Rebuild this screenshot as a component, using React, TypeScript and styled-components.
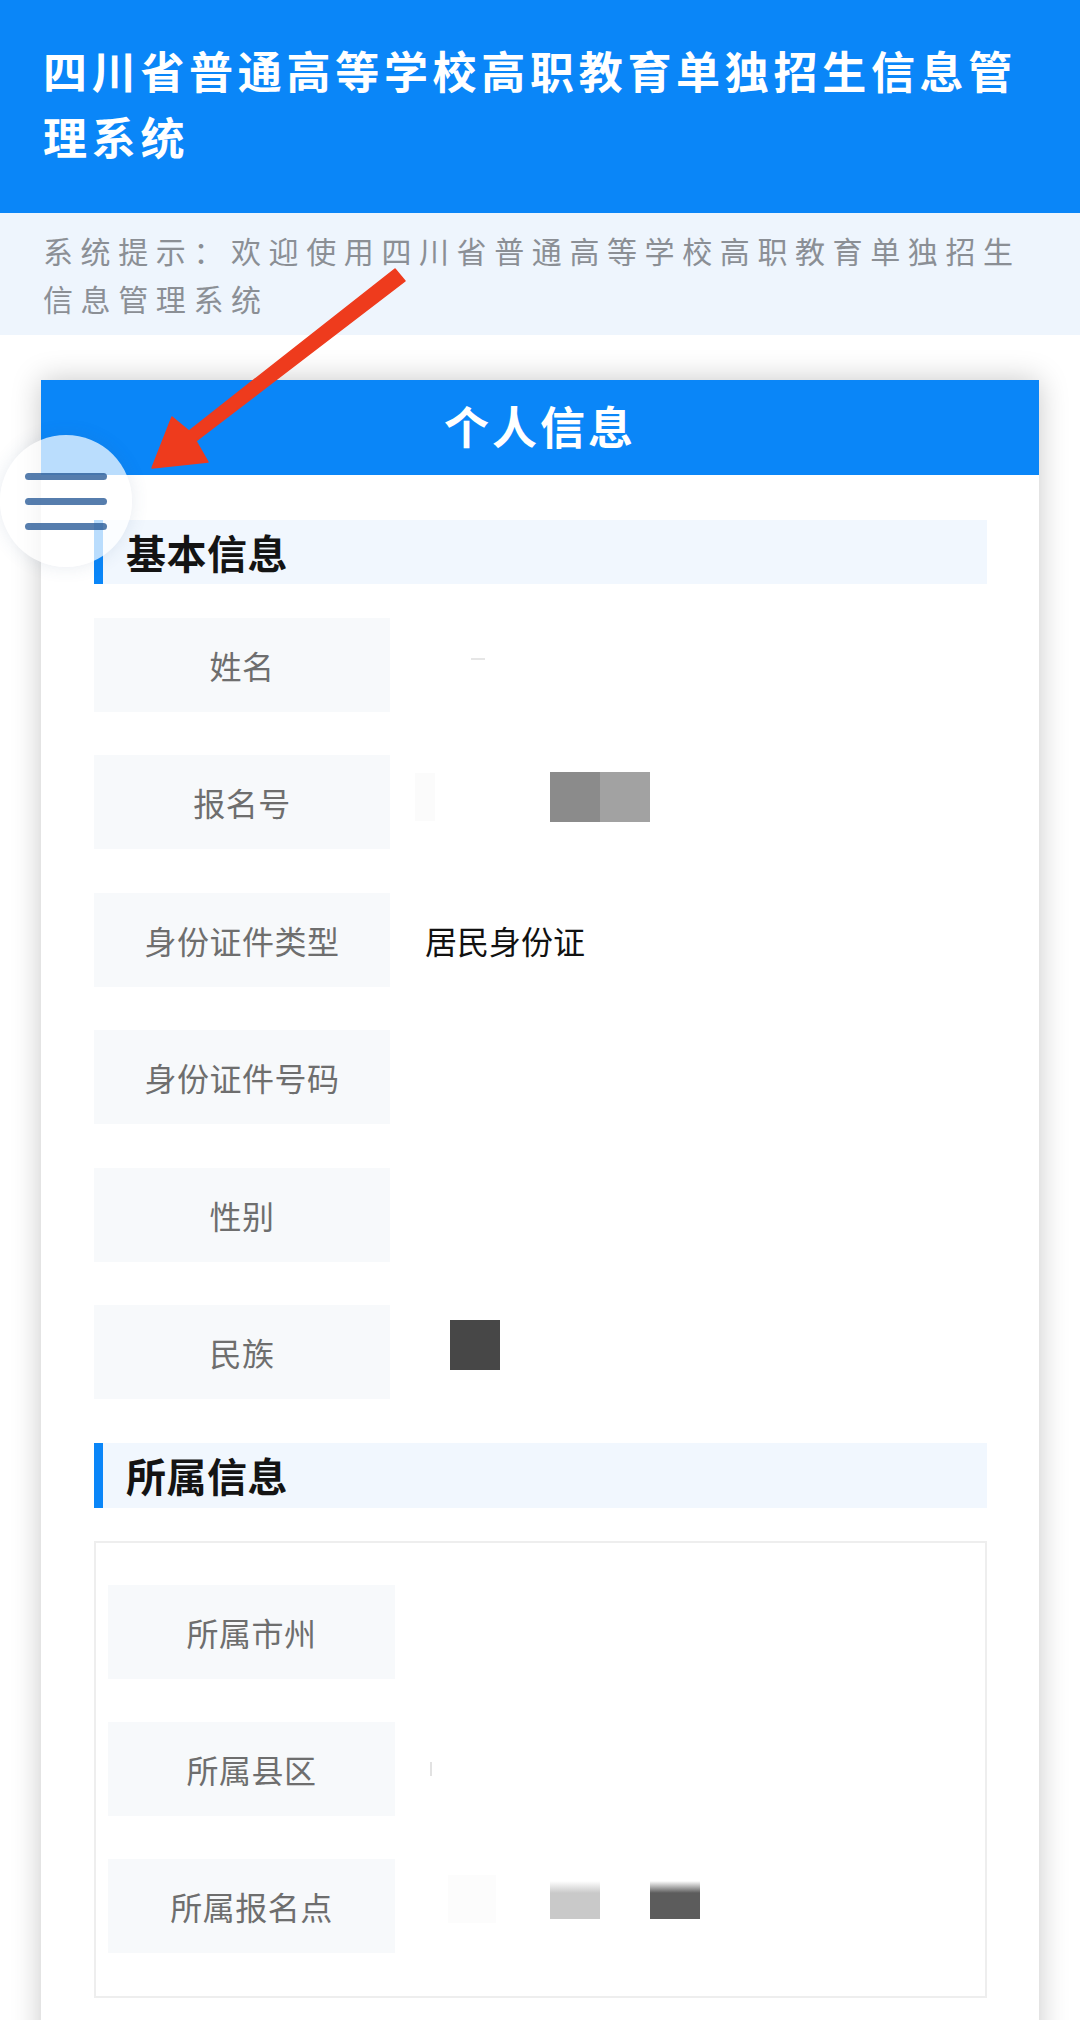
import React from "react";
import styled, { createGlobalStyle } from "styled-components";

const Global = createGlobalStyle`
  html, body { margin: 0; padding: 0; background: #ffffff; }
  body { font-family: "Noto Sans CJK SC", "Noto Sans", sans-serif; }
  * { box-sizing: border-box; }
`;

const BLUE = "#0a86f8";

const Page = styled.div`
  position: relative;
  width: 1080px;
  min-height: 2020px;
  overflow: hidden;
  background: #ffffff;
`;

const Header = styled.header`
  background: ${BLUE};
  height: 213px;
  padding: 37px 43px 0 43px;
`;

const Title = styled.h1`
  margin: 0;
  color: #ffffff;
  font-size: 44px;
  font-weight: 700;
  line-height: 66px;
  letter-spacing: 4.7px;
`;

const Notice = styled.div`
  background: #eef5fd;
  padding: 13px 43px 13px 43px;
  color: #8b8f95;
  font-size: 30px;
  line-height: 48px;
  letter-spacing: 7.6px;
`;

const Card = styled.section`
  margin: 45px 41px 0 41px;
  background: #ffffff;
  box-shadow: 0 0 28px rgba(0, 0, 0, 0.22);
`;

const CardHeader = styled.div`
  height: 95px;
  background: ${BLUE};
  color: #ffffff;
  font-size: 45px;
  font-weight: 700;
  letter-spacing: 3px;
  display: flex;
  align-items: center;
  justify-content: center;
  padding-bottom: 4px;
`;

const CardBody = styled.div`
  display: flex;
  flex-direction: column;
  padding: 45px 52px 80px 53px;
`;

const SectionTitle = styled.h2<{ $h: number; $mb: number }>`
  margin: 0 0 ${(p) => p.$mb}px 0;
  height: ${(p) => p.$h}px;
  background: #f1f7fe;
  border-left: 9px solid ${BLUE};
  padding-left: 23px;
  display: flex;
  align-items: center;
  color: #141414;
  font-size: 40px;
  font-weight: 700;
  letter-spacing: 0.5px;
`;

const FieldList = styled.div<{ $gap: number; $mb?: number }>`
  display: flex;
  flex-direction: column;
  gap: ${(p) => p.$gap}px;
  margin-bottom: ${(p) => p.$mb ?? 0}px;
`;

const Row = styled.div<{ $labelW: number; $h: number }>`
  display: grid;
  grid-template-columns: ${(p) => p.$labelW}px 1fr;
  column-gap: 35px;
  height: ${(p) => p.$h}px;
`;

const Label = styled.div`
  background: #f7f9fb;
  display: flex;
  align-items: center;
  justify-content: center;
  color: #6e6e6e;
  font-size: 32px;
  letter-spacing: 0.5px;
`;

const Value = styled.div`
  display: flex;
  align-items: center;
  color: #111111;
  font-size: 32px;
`;

const Redaction = styled.span<{ $w: number; $h: number; $c: string; $ml: number; $dy?: number; $fade?: boolean }>`
  display: inline-block;
  flex: none;
  width: ${(p) => p.$w}px;
  height: ${(p) => p.$h}px;
  margin-left: ${(p) => p.$ml}px;
  transform: translateY(${(p) => p.$dy ?? 0}px);
  background: ${(p) =>
    p.$fade
      ? `linear-gradient(to bottom, #ffffff 0px, ${p.$c} 12px, ${p.$c} 100%)`
      : p.$c};
`;

const Framed = styled.div`
  border: 2px solid #eeeeee;
  padding: 42px 12px 43px 12px;
`;

const MenuFab = styled.button`
  position: absolute;
  left: 0;
  top: 435px;
  width: 132px;
  height: 132px;
  border-radius: 50%;
  border: none;
  padding: 0 0 0 25px;
  background: rgba(255, 255, 255, 0.72);
  box-shadow: 0 0 18px rgba(60, 90, 130, 0.12);
  display: flex;
  flex-direction: column;
  justify-content: center;
  align-items: flex-start;
  gap: 18px;
  z-index: 5;
`;

const MenuBar = styled.span`
  display: block;
  width: 82px;
  height: 7px;
  border-radius: 3.5px;
  background: rgba(38, 88, 150, 0.78);
`;

const ArrowLayer = styled.svg`
  position: absolute;
  left: 0;
  top: 0;
  width: 1080px;
  height: 600px;
  pointer-events: none;
  z-index: 6;
`;

type Block = { w: number; h: number; c: string; ml: number; dy?: number; fade?: boolean };
type Field = { label: string; value?: string; blocks?: Block[] };

const basic: Field[] = [
  { label: "姓名", blocks: [{ w: 14, h: 2, c: "#e6e6e6", ml: 46, dy: -6 }] },
  {
    label: "报名号",
    blocks: [
      { w: 20, h: 48, c: "#fbfbfb", ml: -10, dy: -5 },
      { w: 50, h: 50, c: "#8b8b8b", ml: 115, dy: -5 },
      { w: 50, h: 50, c: "#a2a2a2", ml: 0, dy: -5 },
    ],
  },
  { label: "身份证件类型", value: "居民身份证" },
  { label: "身份证件号码" },
  { label: "性别" },
  { label: "民族", blocks: [{ w: 50, h: 50, c: "#474747", ml: 25, dy: -7 }] },
];

const belong: Field[] = [
  { label: "所属市州" },
  { label: "所属县区", blocks: [{ w: 2, h: 14, c: "#e2e2e2", ml: 0, dy: 0 }] },
  {
    label: "所属报名点",
    blocks: [
      { w: 48, h: 48, c: "#fcfcfc", ml: 18, dy: -7 },
      { w: 50, h: 38, c: "#c9c9c9", ml: 54, dy: -6, fade: true },
      { w: 50, h: 38, c: "#5c5c5c", ml: 50, dy: -6, fade: true },
    ],
  },
];

function FieldRows({ items, labelW, h }: { items: Field[]; labelW: number; h: number }) {
  return (
    <>
      {items.map((f) => (
        <Row key={f.label} $labelW={labelW} $h={h}>
          <Label>{f.label}</Label>
          <Value>
            {f.value}
            {f.blocks?.map((b, i) => (
              <Redaction key={i} $w={b.w} $h={b.h} $c={b.c} $ml={b.ml} $dy={b.dy} $fade={b.fade} />
            ))}
          </Value>
        </Row>
      ))}
    </>
  );
}

export default function App() {
  return (
    <>
      <Global />
      <Page>
        <Header>
          <Title>四川省普通高等学校高职教育单独招生信息管理系统</Title>
        </Header>
        <Notice>系统提示：欢迎使用四川省普通高等学校高职教育单独招生信息管理系统</Notice>
        <Card>
          <CardHeader>个人信息</CardHeader>
          <CardBody>
            <SectionTitle $h={64} $mb={34}>基本信息</SectionTitle>
            <FieldList $gap={43.4} $mb={44}>
              <FieldRows items={basic} labelW={296} h={94} />
            </FieldList>
            <SectionTitle $h={65} $mb={33}>所属信息</SectionTitle>
            <Framed>
              <FieldList $gap={43}>
                <FieldRows items={belong} labelW={287} h={94} />
              </FieldList>
            </Framed>
          </CardBody>
        </Card>
        <MenuFab aria-label="菜单">
          <MenuBar />
          <MenuBar />
          <MenuBar />
        </MenuFab>
        <ArrowLayer viewBox="0 0 1080 600">
          <polygon
            points="395,269 405,281 196,441 208,462 152,468 172,417 189,431"
            fill="#ee3b1d"
            strokeLinejoin="round"
            stroke="#ee3b1d"
            strokeWidth="1.5"
          />
        </ArrowLayer>
      </Page>
    </>
  );
}
